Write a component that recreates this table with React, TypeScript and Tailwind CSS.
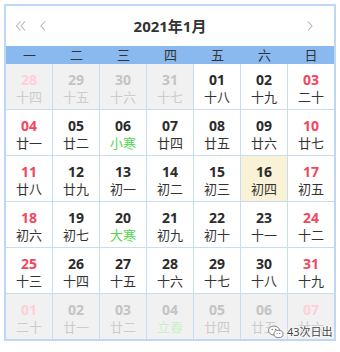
import React from "react";

type Cell = { d: string; l: string; other?: boolean; term?: boolean; today?: boolean };

const cells: Cell[] = [
  { d: "28", l: "十四", other: true },
  { d: "29", l: "十五", other: true },
  { d: "30", l: "十六", other: true },
  { d: "31", l: "十七", other: true },
  { d: "01", l: "十八" },
  { d: "02", l: "十九" },
  { d: "03", l: "二十" },
  { d: "04", l: "廿一" },
  { d: "05", l: "廿二" },
  { d: "06", l: "小寒", term: true },
  { d: "07", l: "廿四" },
  { d: "08", l: "廿五" },
  { d: "09", l: "廿六" },
  { d: "10", l: "廿七" },
  { d: "11", l: "廿八" },
  { d: "12", l: "廿九" },
  { d: "13", l: "初一" },
  { d: "14", l: "初二" },
  { d: "15", l: "初三" },
  { d: "16", l: "初四", today: true },
  { d: "17", l: "初五" },
  { d: "18", l: "初六" },
  { d: "19", l: "初七" },
  { d: "20", l: "大寒", term: true },
  { d: "21", l: "初九" },
  { d: "22", l: "初十" },
  { d: "23", l: "十一" },
  { d: "24", l: "十二" },
  { d: "25", l: "十三" },
  { d: "26", l: "十四" },
  { d: "27", l: "十五" },
  { d: "28", l: "十六" },
  { d: "29", l: "十七" },
  { d: "30", l: "十八" },
  { d: "31", l: "十九" },
  { d: "01", l: "二十", other: true },
  { d: "02", l: "廿一", other: true },
  { d: "03", l: "廿二", other: true },
  { d: "04", l: "立春", other: true, term: true },
  { d: "05", l: "廿四", other: true },
  { d: "06", l: "廿五", other: true },
  { d: "07", l: "廿六", other: true },
];

const weekdays = ["一", "二", "三", "四", "五", "六", "日"];

export default function App() {
  return (
    <div
      className="w-[340px] h-[352px] bg-white relative pt-[4px] pl-[4px]"
      style={{ fontFamily: '"Noto Sans", "Noto Sans CJK SC", sans-serif' }}
    >
      <div className="w-[332px] border-2 border-[#bcd8f6] bg-white">
        <div className="h-[40px] flex items-center relative">
          <div className="absolute left-[9px] top-[14px] flex items-center gap-[12px]">
            <svg width="12" height="12" viewBox="0 0 12 12" fill="none" stroke="#b5b5b5" strokeWidth="1.1">
              <path d="M5.5 1.5 L1.5 6 L5.5 10.5" />
              <path d="M10 1.5 L6 6 L10 10.5" />
            </svg>
            <svg width="8" height="12" viewBox="0 0 8 12" fill="none" stroke="#b5b5b5" strokeWidth="1.1">
              <path d="M6 1.5 L2 6 L6 10.5" />
            </svg>
          </div>
          <div className="flex-1 text-center text-[15px] font-bold text-[#333] leading-none">2021年1月</div>
          <div className="absolute left-[300px] top-[14px]">
            <svg width="8" height="12" viewBox="0 0 8 12" fill="none" stroke="#b5b5b5" strokeWidth="1.1">
              <path d="M2 1.5 L6 6 L2 10.5" />
            </svg>
          </div>
        </div>
        <div className="grid grid-cols-[repeat(6,47px)_46px] h-[18px] bg-[#89b9ef] text-[13px] text-[#333] leading-[18px]">
          {weekdays.map((w) => (
            <div key={w} className="text-center">{w}</div>
          ))}
        </div>
        <div className="grid grid-cols-[repeat(6,47px)_46px]">
          {cells.map((c, i) => {
            const col = i % 7;
            const row = Math.floor(i / 7);
            const red = col === 0 || col === 6;
            let numColor = red ? "text-[#f1475d]" : "text-[#2b2b2b]";
            let lunColor = c.term ? "text-[#4fd64f]" : "text-[#333]";
            if (c.other) {
              numColor = red ? "text-[#ffd0d6]" : "text-[#c4c4c4]";
              lunColor = c.term ? "text-[#c9f0c9]" : "text-[#cccccc]";
            }
            const bg = c.today ? "bg-[#faf2d6]" : c.other ? "bg-[#f1f1f1]" : "bg-white";
            return (
              <div
                key={i}
                className={`${bg} ${col < 6 ? "border-r border-[#c6ddf4]" : ""} ${
                  row < 5 ? "h-[46px] border-b border-[#c6ddf4]" : "h-[45px]"
                } flex flex-col items-center pt-[7px]`}
              >
                <div className={`text-[14px] font-bold leading-[18px] ${numColor}`}>{c.d}</div>
                <div className={`text-[13px] leading-[17px] ${lunColor}`}>{c.l}</div>
              </div>
            );
          })}
        </div>
      </div>
      <div className="absolute left-[268px] top-[325px] flex items-center gap-[3px]">
        <svg width="16" height="14" viewBox="0 0 16 14">
          <ellipse cx="6" cy="5.5" rx="5.5" ry="4.5" fill="#fff" stroke="#666" strokeWidth="0.8" />
          <ellipse cx="10.5" cy="9" rx="4.5" ry="3.7" fill="#fff" stroke="#666" strokeWidth="0.8" />
          <circle cx="4.2" cy="4.5" r="0.7" fill="#666" />
          <circle cx="7.8" cy="4.5" r="0.7" fill="#666" />
          <circle cx="9.2" cy="8.5" r="0.55" fill="#666" />
          <circle cx="11.8" cy="8.5" r="0.55" fill="#666" />
        </svg>
        <span
          className="text-[11px] leading-[14px] text-[#444]"
          style={{ textShadow: "0 0 2px #fff, 0 0 2px #fff, 0 0 1px #fff" }}
        >
          43次日出
        </span>
      </div>
    </div>
  );
}
